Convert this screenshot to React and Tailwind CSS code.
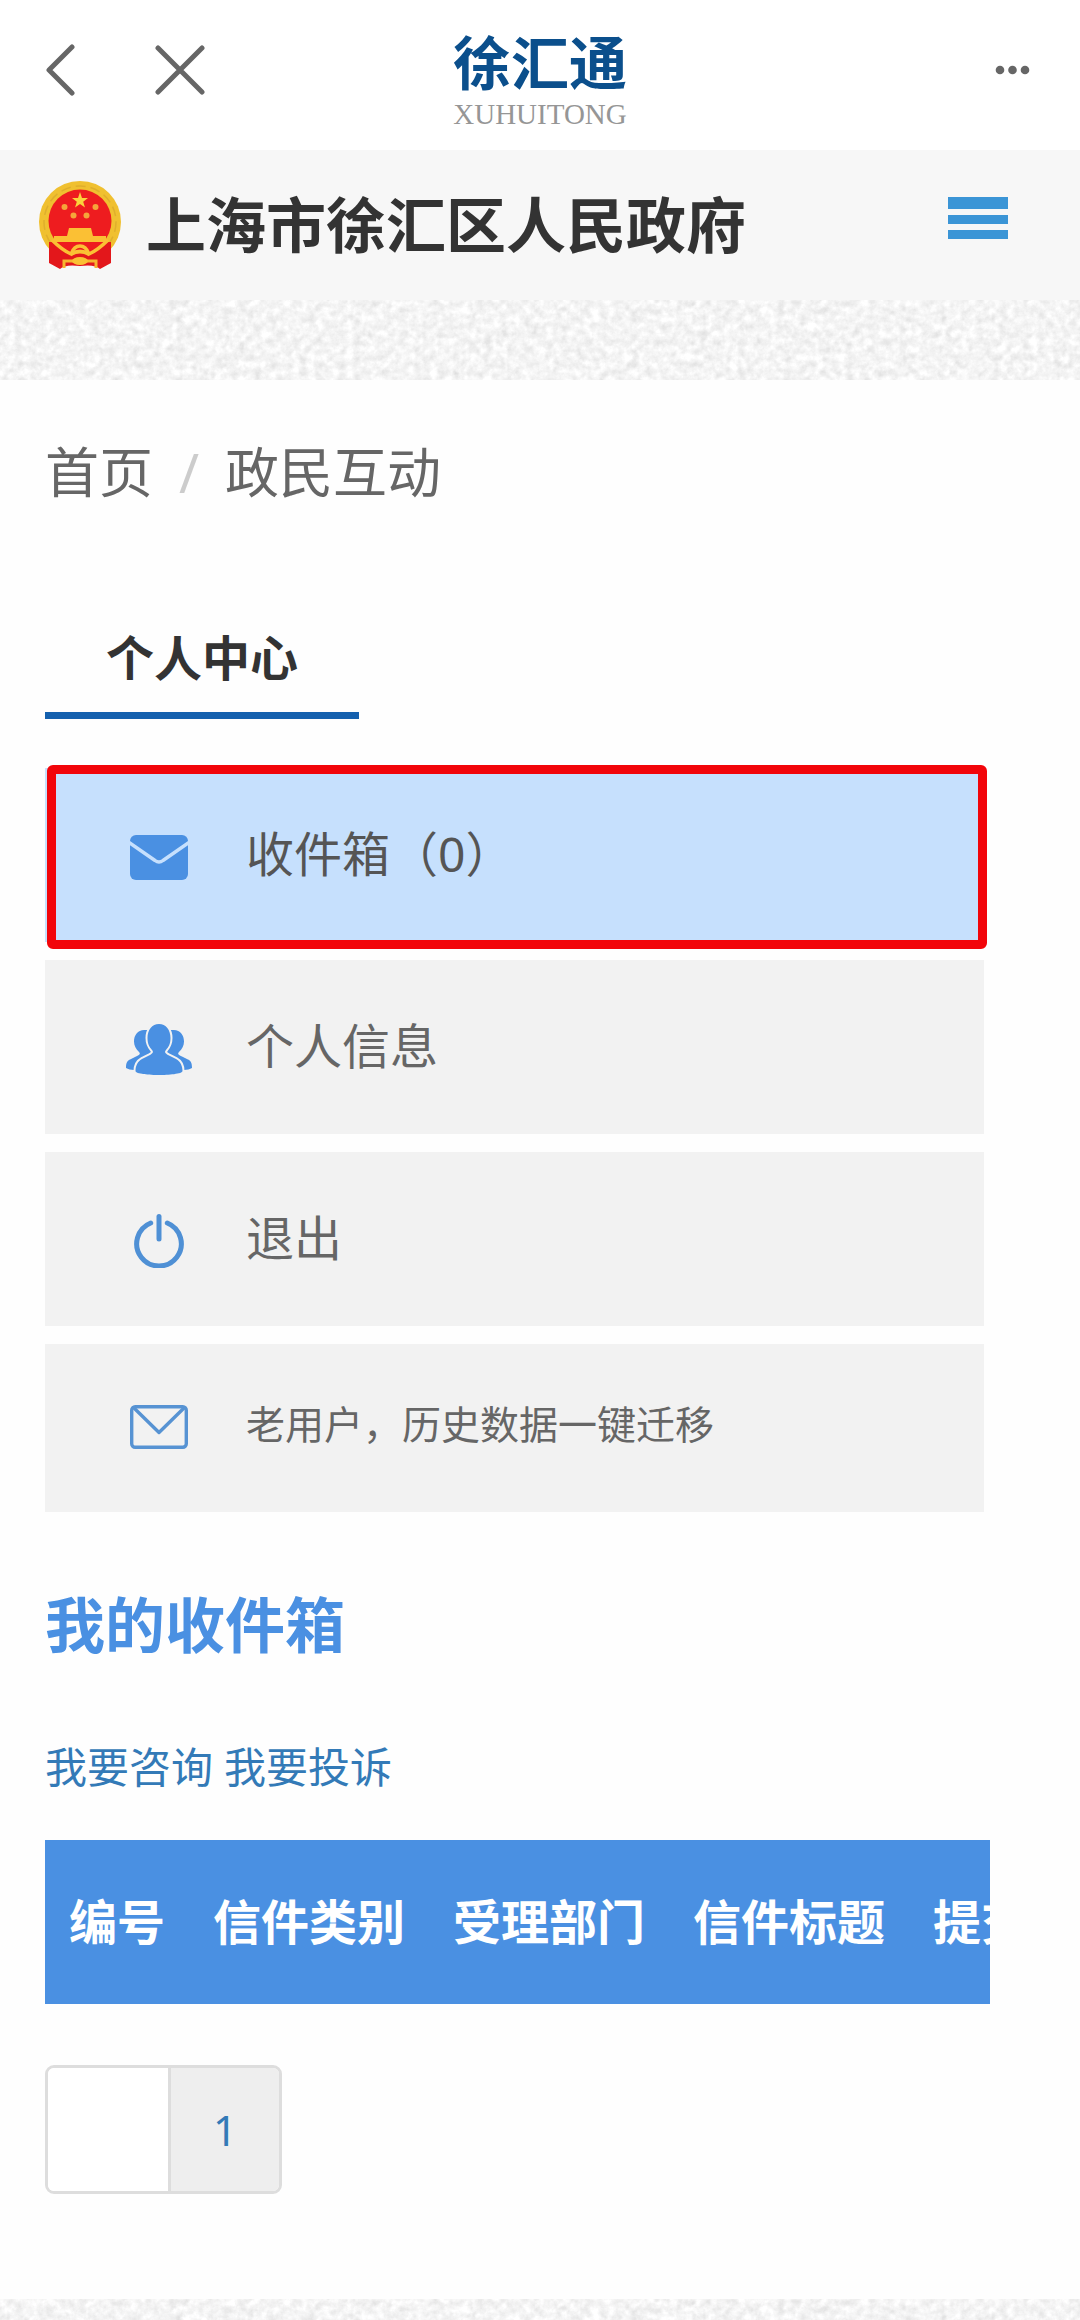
import React from "react";

const menuItems = [
  { id: "inbox", label: "收件箱（0）", Icon: MailSolidIcon, active: true },
  { id: "profile", label: "个人信息", Icon: UsersIcon },
  { id: "logout", label: "退出", Icon: PowerIcon },
  { id: "migrate", label: "老用户，历史数据一键迁移", Icon: MailOutlineIcon, small: true },
];

const columns = ["编号", "信件类别", "受理部门", "信件标题", "提交时间"];

function MailSolidIcon() {
  return (
    <svg width="58" height="45" viewBox="0 0 58 45" aria-hidden="true">
      <rect width="58" height="45" rx="6" fill="#4a90e2" />
      <path
        d="M-1 7.5 L25 25.5 Q29 28.500 33 25.5 L59 7.5"
        fill="none"
        stroke="#c6e0fd"
        strokeWidth="3.4"
      />
    </svg>
  );
}

function UsersIcon() {
  return (
    <svg width="66" height="51" viewBox="0 0 66 51" aria-hidden="true">
      <g fill="#4a90e2">
        <path d="M19 6C12 5.500 8 11 8 17.500C8 22 10 25 13 28C15 30 13 31 10 32.500L4 35.500C1 37 0 39 0 44C2 45 5 46 8 46H30L24 6Z" />
        <path d="M47 6C54 5.500 58 11 58 17.500C58 22 56 25 53 28C51 30 53 31 56 32.500L62 35.500C65 37 66 39 66 44C64 45 61 46 58 46H36L42 6Z" />
        <path
          d="M33 0C40 0 44.500 6 44.500 14C44.500 20 42.500 23 40 26C38 28 39.500 29.500 42 31L50 35C54.500 37.500 56.500 42 56.500 47C56.500 50 42 51 33 51C24 51 9.500 50 9.500 47C9.500 42 11.500 37.500 16 35L24 31C26.500 29.500 28 28 26 26C23.500 23 21.500 20 21.500 14C21.500 6 26 0 33 0Z"
          stroke="#f2f2f2"
          strokeWidth="4"
          paintOrder="stroke"
        />
      </g>
    </svg>
  );
}

function PowerIcon() {
  return (
    <svg
      width="54"
      height="54"
      viewBox="0 0 54 54"
      fill="none"
      stroke="#4f90d5"
      strokeWidth="5"
      strokeLinecap="round"
      aria-hidden="true"
    >
      <path d="M18.700 9A22.300 22.300 0 1 0 35.300 9" />
      <path d="M27 2.500V25" />
    </svg>
  );
}

function MailOutlineIcon() {
  return (
    <svg
      width="58"
      height="44"
      viewBox="0 0 58 44"
      fill="none"
      stroke="#5793d3"
      strokeWidth="3.4"
      aria-hidden="true"
    >
      <rect x="1.700" y="1.700" width="54.600" height="40.600" rx="3.500" />
      <path d="M4 3L29 27.500L54 3" strokeLinejoin="round" />
    </svg>
  );
}

function Emblem() {
  return (
    <svg width="84" height="90" viewBox="0 0 84 90" role="img" aria-label="国徽">
      <circle cx="42" cy="42" r="41" fill="#f0c030" />
      <circle cx="42" cy="42" r="36" fill="none" stroke="#dfae2c" strokeWidth="1.5" strokeDasharray="10 5" />
      <path d="M11 62L11 83L22 89Q27 84 42 86Q57 84 62 89L73 83L73 62Z" fill="#e3171b" />
      <circle cx="42" cy="41" r="31.500" fill="#ee1c1f" />
      <path
        d="M42 12L44 18H50L45.200 21.700L47 27.500L42 24L37 27.500L38.800 21.700L34 18H40Z"
        fill="#fbd23c"
      />
      <g fill="#f5a53a">
        <circle cx="26.500" cy="27" r="3" />
        <circle cx="57.500" cy="27" r="3" />
        <circle cx="35.500" cy="35.500" r="3" />
        <circle cx="48.500" cy="35.500" r="3" />
      </g>
      <path d="M31 48H53L55 56H68V62H16V56H29Z" fill="#fbc034" />
      <path
        d="M14 60Q24 70 33 74Q36 66 42 66Q48 66 51 74Q60 70 70 60"
        fill="none"
        stroke="#fbc034"
        strokeWidth="3.5"
      />
      <path d="M33 74Q42 69 51 74" fill="none" stroke="#fbc034" strokeWidth="4" />
      <path d="M26 88V81H58V88" fill="none" stroke="#f6b52f" strokeWidth="3" />
      <ellipse cx="42" cy="81" rx="8" ry="4" fill="#fbc034" />
    </svg>
  );
}

// speckled paper texture behind the white content block
function Texture({ id }) {
  return (
    <svg className="block h-full w-full" aria-hidden="true">
      <filter id={id} x="0" y="0" width="100%" height="100%" colorInterpolationFilters="sRGB">
        <feTurbulence type="fractalNoise" baseFrequency="0.13" numOctaves="4" seed="11" />
        <feColorMatrix values="0.12 0.12 0 0 0.838  0.12 0.12 0 0 0.838  0.12 0.12 0 0 0.838  0 0 0 0 1" />
      </filter>
      <rect width="100%" height="100%" filter={`url(#${id})`} />
    </svg>
  );
}

function TopBar() {
  return (
    <div className="grid grid-cols-3 items-center bg-white px-[46px] pt-[27px] pb-[21px]">
      <div className="flex items-center gap-20 pb-4">
        <button type="button" aria-label="返回" className="cursor-pointer">
          <svg width="29" height="52" viewBox="0 0 29 52" fill="none" stroke="#666" strokeWidth="5" strokeLinecap="round" strokeLinejoin="round">
            <path d="M26 3L3 26L26 49" />
          </svg>
        </button>
        <button type="button" aria-label="关闭" className="cursor-pointer">
          <svg width="50" height="50" viewBox="0 0 50 50" fill="none" stroke="#666" strokeWidth="5" strokeLinecap="round">
            <path d="M3 3L47 47M47 3L3 47" />
          </svg>
        </button>
      </div>
      <div className="flex flex-col items-center">
        <div className="text-[58px] leading-[72px] font-bold whitespace-nowrap text-[#0b4f8c]">徐汇通</div>
        <div className="font-['Liberation_Serif',serif] text-[29px] leading-[30px] text-[#969696]">XUHUITONG</div>
      </div>
      <div className="flex justify-end pb-4">
        <button type="button" aria-label="更多" className="cursor-pointer">
          <svg width="40" height="12" viewBox="0 0 40 12" fill="#666">
            <circle cx="6" cy="6" r="4.300" />
            <circle cx="18.500" cy="6" r="4.300" />
            <circle cx="31" cy="6" r="4.300" />
          </svg>
        </button>
      </div>
    </div>
  );
}

function SiteHeader() {
  return (
    <header className="flex items-center justify-between bg-[#f7f7f7] py-[30px] pr-[72px] pl-[38px]">
      <div className="flex items-center gap-6">
        <Emblem />
        <h1 className="text-[60px] leading-[90px] font-bold whitespace-nowrap text-[#333]">
          上海市徐汇区人民政府
        </h1>
      </div>
      <button type="button" aria-label="菜单" className="flex cursor-pointer flex-col gap-1.5 pb-3.5">
        <span className="h-3 w-[60px] bg-[#3b95d6]" />
        <span className="h-[9px] w-[60px] bg-[#3b95d6]" />
        <span className="h-[9px] w-[60px] bg-[#3b95d6]" />
      </button>
    </header>
  );
}

function MenuItem({ item }) {
  const { label, Icon, active, small } = item;
  return (
    <li className="relative">
      <a
        href="#"
        className={`flex items-center pl-[78px] leading-[72px] ${
          active ? "bg-[#c6e0fd] text-[#555]" : "bg-[#f2f2f2] text-[#666]"
        } ${small ? "pt-11 pb-[52px] text-[39px]" : "pt-[50px] pb-[52px] text-[48px]"}`}
      >
        <span className="flex w-[72px] justify-center pt-1.5">
          <Icon />
        </span>
        <span className="pl-[51px]">{label}</span>
      </a>
      {active && (
        <span className="pointer-events-none absolute -top-[3px] -right-[3px] -bottom-[7px] left-[2px] rounded-md border-[9px] border-[#f2050a]" />
      )}
    </li>
  );
}

function App() {
  return (
    <div className="flex min-h-screen flex-col bg-white font-['Noto_Sans','Noto_Sans_CJK_SC',sans-serif]">
      <TopBar />
      <SiteHeader />
      <div className="h-20">
        <Texture id="texture-top" />
      </div>

      <main className="bg-[#fefefe] pt-14 pr-[90px] pb-[105px] pl-[45px]">
        <nav className="flex gap-[26px] text-[54px] leading-[72px] text-[#666]">
          <a href="#">首页</a>
          <span className="text-[#ccc]">/</span>
          <a href="#">政民互动</a>
        </nav>

        <div className="mt-[114px] flex">
          <h2 className="border-b-[7px] border-[#1460ae] px-[61px] pb-[18px] text-[48px] leading-[72px] font-bold text-[#333]">
            个人中心
          </h2>
        </div>

        <ul className="mt-[49px] mr-1.5 flex flex-col gap-[18px]">
          {menuItems.map((item) => (
            <MenuItem key={item.id} item={item} />
          ))}
        </ul>

        <h3 className="mt-[77px] text-[60px] leading-[72px] font-bold text-[#4a90e2]">我的收件箱</h3>

        <div className="mt-[76px] text-[42px] leading-[60px] text-[#337ab7]">
          <a href="#">我要咨询</a> <a href="#">我要投诉</a>
        </div>

        <div className="mt-[43px] overflow-hidden">
          <table className="border-collapse bg-[#4a90e2] text-[48px] leading-[72px] text-white">
            <thead>
              <tr>
                {columns.map((name) => (
                  <th key={name} scope="col" className="px-6 py-[46px] text-left font-bold whitespace-nowrap">
                    {name}
                  </th>
                ))}
              </tr>
            </thead>
          </table>
        </div>

        <nav aria-label="分页" className="mt-[61px] flex">
          <div className="flex overflow-hidden rounded-[9px] border-[3px] border-[#ddd] text-[42px] leading-[63px] text-[#337ab7]">
            <a href="#" aria-label="上一页" className="w-[120px] bg-white" />
            <a href="#" className="border-l-[3px] border-[#ddd] bg-[#eee] px-[42px] py-[30px]">
              1
            </a>
          </div>
        </nav>
      </main>

      <div className="h-5 grow">
        <Texture id="texture-bottom" />
      </div>
    </div>
  );
}

export default App;
